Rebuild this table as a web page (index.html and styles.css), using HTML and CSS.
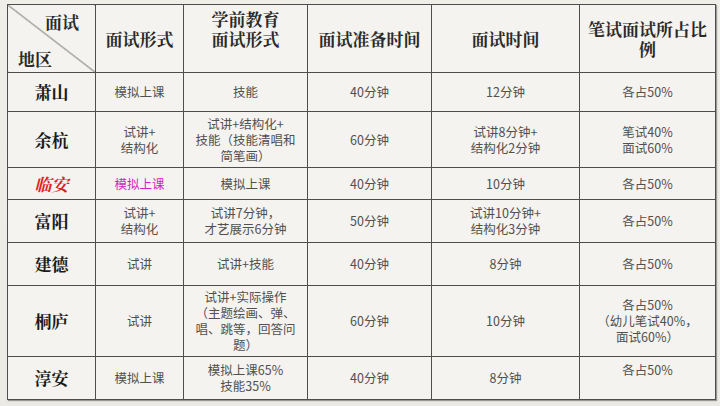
FILE: index.html
```html
<!DOCTYPE html>
<html lang="zh-CN">
<head>
<meta charset="utf-8">
<title>面试形式对比</title>
<link rel="stylesheet" href="styles.css">
</head>
<body>
<table class="grid">
  <colgroup>
    <col class="c1"><col class="c2"><col class="c3"><col class="c4"><col class="c5"><col class="c6">
  </colgroup>
  <thead>
    <tr class="r-head">
      <th class="diag">
        <div class="diag-box">
          <span class="diag-top">面试</span>
          <span class="diag-bottom">地区</span>
        </div>
      </th>
      <th>面试形式</th>
      <th>学前教育<br>面试形式<br>&nbsp;</th>
      <th>面试准备时间</th>
      <th>面试时间</th>
      <th>笔试面试所占比<br>例</th>
    </tr>
  </thead>
  <tbody>
    <tr class="r1">
      <td class="region">萧山</td>
      <td>模拟上课</td>
      <td>技能</td>
      <td>40分钟</td>
      <td>12分钟</td>
      <td>各占50%</td>
    </tr>
    <tr class="r2">
      <td class="region">余杭</td>
      <td>试讲+<br>结构化</td>
      <td>试讲+结构化+<br>技能（技能清唱和<br>简笔画）</td>
      <td>60分钟</td>
      <td>试讲8分钟+<br>结构化2分钟</td>
      <td>笔试40%<br>面试60%</td>
    </tr>
    <tr class="r3">
      <td class="region region-red">临安</td>
      <td class="magenta">模拟上课</td>
      <td>模拟上课</td>
      <td>40分钟</td>
      <td>10分钟</td>
      <td>各占50%</td>
    </tr>
    <tr class="r4">
      <td class="region">富阳</td>
      <td>试讲+<br>结构化</td>
      <td>试讲7分钟，<br>才艺展示6分钟</td>
      <td>50分钟</td>
      <td>试讲10分钟+<br>结构化3分钟</td>
      <td>各占50%</td>
    </tr>
    <tr class="r5">
      <td class="region">建德</td>
      <td>试讲</td>
      <td>试讲+技能</td>
      <td>40分钟</td>
      <td>8分钟</td>
      <td>各占50%</td>
    </tr>
    <tr class="r6">
      <td class="region">桐庐</td>
      <td>试讲</td>
      <td>试讲+实际操作<br>（主题绘画、弹、<br>唱、跳等，回答问<br>题）</td>
      <td>60分钟</td>
      <td>10分钟</td>
      <td>各占50%<br>（幼儿笔试40%，<br>面试60%）</td>
    </tr>
    <tr class="r7">
      <td class="region">淳安</td>
      <td>模拟上课</td>
      <td>模拟上课65%<br>技能35%</td>
      <td>40分钟</td>
      <td>8分钟</td>
      <td>各占50%<br>&nbsp;</td>
    </tr>
  </tbody>
</table>
</body>
</html>
```

FILE: styles.css
```css
html, body {
  margin: 0;
  padding: 0;
}
body {
  width: 720px;
  height: 406px;
  overflow: hidden;
  background: linear-gradient(180deg, #efeee9 0%, #ebeae5 100%);
  padding: 4px 0 0 7px;
  box-sizing: border-box;
  font-family: "Noto Sans CJK SC", "Liberation Sans", sans-serif;
}
.grid {
  border-collapse: collapse;
  table-layout: fixed;
  width: 708px;
  background: #f4f3ef;
  box-shadow: 1px 1px 1px rgba(0, 0, 0, 0.35);
}
.c1 { width: 88px; }
.c2 { width: 88px; }
.c3 { width: 124px; }
.c4 { width: 124px; }
.c5 { width: 148px; }
.c6 { width: 136px; }
.grid th,
.grid td {
  border: 1px solid #4d4d4d;
  padding: 0 2px;
  text-align: center;
  vertical-align: middle;
  white-space: nowrap;
}
.grid th {
  font-family: "Noto Serif CJK SC", "Noto Sans CJK SC", serif;
  font-size: 17px;
  font-weight: 700;
  line-height: 20px;
  color: #2a2a2a;
}
.grid td {
  font-size: 12.5px;
  line-height: 16px;
  color: #505050;
}
.r-head { height: 68px; }
.r1 { height: 39px; }
.r2 { height: 56px; }
.r3 { height: 32px; }
.r4 { height: 43px; }
.r5 { height: 43px; }
.r6 { height: 71px; }
.r7 { height: 43px; }

.diag {
  padding: 0;
  background: linear-gradient(to top right, transparent calc(50% - 0.7px), #4d4d4d 50%, transparent calc(50% + 0.7px));
}
.diag-box {
  display: flex;
  flex-direction: column;
  justify-content: space-between;
  height: 66px;
  padding: 6px 14px 3px 8px;
  box-sizing: border-box;
}
.diag-top {
  align-self: flex-end;
}
.diag-bottom {
  align-self: flex-start;
}
.grid td.region {
  font-family: "Noto Serif CJK SC", "Noto Sans CJK SC", serif;
  font-size: 17px;
  font-weight: 700;
  color: #1a1a1a;
  line-height: 20px;
}
.grid td.region-red {
  color: #e0201e;
  font-style: italic;
}
.grid td.magenta {
  color: #d21ec4;
}
```
